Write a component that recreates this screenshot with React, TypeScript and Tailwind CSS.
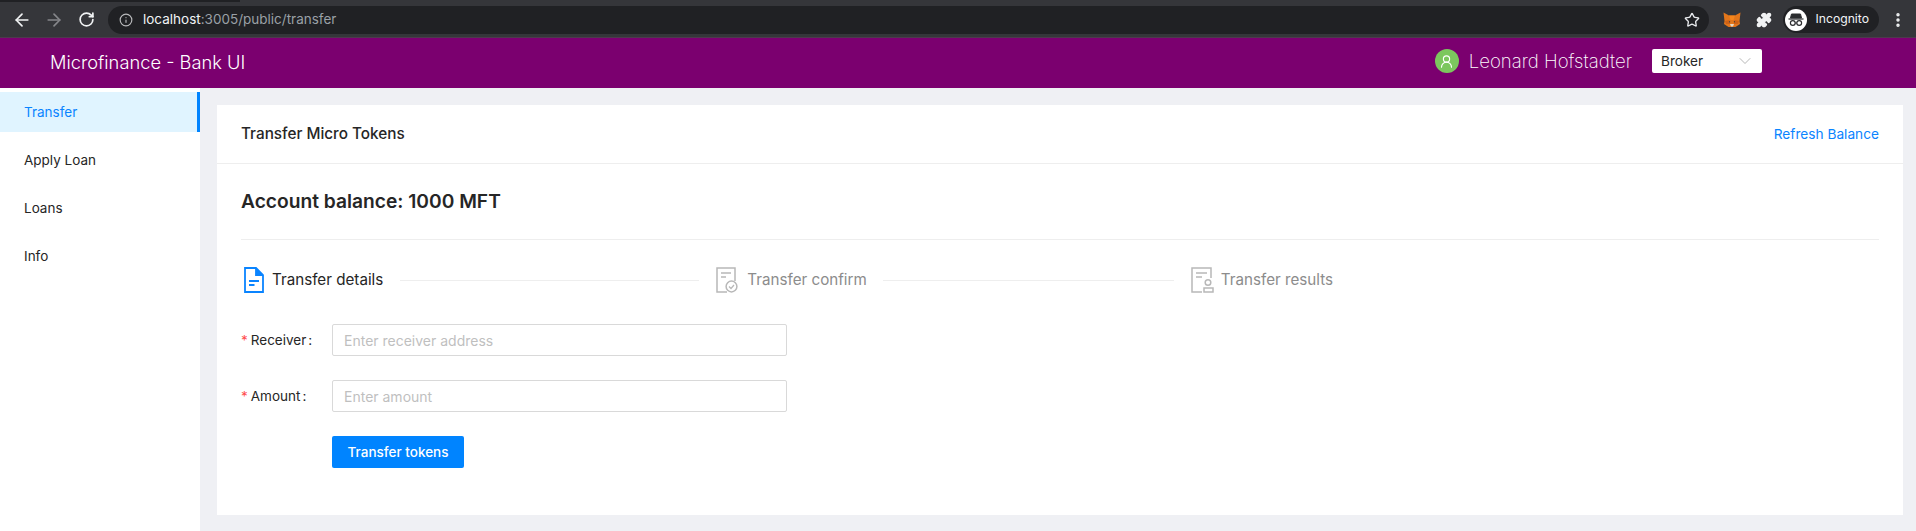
import { ArrowLeft, ArrowRight, ChevronDown, Info, MoreVertical, Puzzle, RotateCw, Star, UserRound } from "lucide-react";

function Fox() {
  return (
    <svg width="18" height="16" viewBox="0 0 18 16">
      <path d="M0.5 0.5 L6 3.5 H12 L17.5 0.5 L16.5 9 L17 12 L12.5 15 H5.5 L1 12 L1.5 9 Z" fill="#e2761b" />
      <path d="M6 3.5 H12 L10.5 8 H7.5 Z" fill="#f6851b" />
      <path d="M2 9 L6.5 8 L7 12 L3 12 Z M16 9 L11.5 8 L11 12 L15 12 Z" fill="#cd6116" />
      <path d="M7 12 H11 L10 14.5 H8 Z" fill="#e4d7c6" />
      <path d="M6 9 L7.5 10 L6 10.5 Z M12 9 L10.5 10 L12 10.5 Z" fill="#233447" />
    </svg>
  );
}

function IncognitoIcon() {
  return (
    <svg width="16" height="14" viewBox="0 0 16 14" fill="none" stroke="#2b2c2f">
      <path d="M3.5 1 H12.5 L13.5 5 H2.5 Z" fill="#2b2c2f" />
      <path d="M0.5 6 H15.5" strokeWidth="1.2" />
      <circle cx="4.8" cy="10" r="2.4" strokeWidth="1.2" />
      <circle cx="11.2" cy="10" r="2.4" strokeWidth="1.2" />
      <path d="M7.2 10 H8.8" strokeWidth="1.2" />
    </svg>
  );
}

function BrowserBar() {
  return (
    <div className="font-['Inter',sans-serif] text-white">
      <div className="h-[2px] bg-[#35363a]">
        <div className="h-full w-[240px] bg-[#202124]" />
      </div>
      <div className="flex h-[36px] items-center border-b border-[#4d3a4d] bg-[#35363a] pr-[9px] pl-[12px]">
        <ArrowLeft size={20} strokeWidth={2} className="text-[#f1f3f4]" />
        <ArrowRight size={20} strokeWidth={2} className="ml-[12px] text-[#85868a]" />
        <RotateCw size={17} strokeWidth={2.4} className="ml-[14px] text-[#f1f3f4]" />
        <div className="ml-[13px] flex h-[28px] flex-1 items-center rounded-full bg-[#202124] pr-[9px] pl-[11px]">
          <Info size={14} className="text-[#b9babc]" />
          <span className="ml-[10px] text-[13.5px] text-[#f1f3f4]">
            localhost<span className="text-[#9aa0a6]">:3005/public/transfer</span>
          </span>
          <Star size={16} className="ml-auto text-[#e8eaed]" />
        </div>
        <div className="ml-[14px]">
          <Fox />
        </div>
        <Puzzle size={16} fill="#f1f3f4" className="ml-[15px] text-[#f1f3f4]" />
        <div className="ml-[11px] flex h-[27px] items-center rounded-full bg-[#202124] pr-[10px] pl-[2px]">
          <div className="flex h-[22px] w-[22px] items-center justify-center rounded-full bg-white">
            <IncognitoIcon />
          </div>
          <span className="ml-[8px] text-[12.2px] text-[#f1f3f4]">Incognito</span>
        </div>
        <MoreVertical size={18} strokeWidth={2.6} className="ml-[10px] text-[#f1f3f4]" />
      </div>
    </div>
  );
}

function Header() {
  return (
    <div className="flex h-[50px] items-center bg-[#7b006f] pb-[3px] pl-[50px] text-white">
      <div className="pt-[2px] text-[18.3px] font-light">Microfinance - Bank UI</div>
      <div className="mr-[154px] ml-auto flex items-center">
        <div className="flex h-[24px] w-[24px] items-center justify-center rounded-full bg-[#7cc75e]">
          <UserRound size={15} strokeWidth={1.8} />
        </div>
        <div className="ml-[10px] text-[18.6px] font-extralight">Leonard Hofstadter</div>
        <div className="ml-[20px] flex h-[24px] w-[110px] items-center justify-between rounded-[2px] bg-white pr-[7px] pl-[9px] text-[13.6px] text-[#262626]">
          Broker
          <ChevronDown size={20} strokeWidth={1} className="text-[#a8a8a8]" />
        </div>
      </div>
    </div>
  );
}

function Sidebar() {
  const items = ["Apply Loan", "Loans", "Info"];
  return (
    <div className="w-[200px] shrink-0 bg-white pt-[4px] text-[13.5px] text-[#262626]">
      <div className="flex h-[40px] items-center border-r-[3px] border-[#0084ff] bg-[#e0f4ff] pt-[1px] pl-[24px] text-[#0a84ff]">Transfer</div>
      <div className="mt-[8px] flex flex-col gap-[8px]">
        {items.map((item) => (
          <div key={item} className="flex h-[40px] items-center pt-[1px] pl-[24px]">
            {item}
          </div>
        ))}
      </div>
    </div>
  );
}

function DetailsIcon() {
  return (
    <svg width="20" height="26" viewBox="0 0 20 26" fill="none" stroke="#0a84ff" strokeWidth="1.8">
      <path d="M1 1 H12 L19 8 V25 H1 Z" />
      <path d="M12 1 V8 H19" fill="#0a84ff" />
      <path d="M5 14 H15 M5 18 H10.5" />
    </svg>
  );
}

function ConfirmIcon() {
  return (
    <svg width="22" height="26" viewBox="0 0 22 26" fill="none" stroke="#b8b8b8" strokeWidth="1.5">
      <path d="M11 25 H1 V1 H19 V14" />
      <path d="M5 6 H15 M5 10 H10" />
      <circle cx="15.5" cy="19.5" r="5.4" fill="#fff" />
      <path d="M13 19.5 L15 21.5 L18 18" strokeWidth="1.2" />
    </svg>
  );
}

function ResultsIcon() {
  return (
    <svg width="23" height="26" viewBox="0 0 23 26" fill="none" stroke="#b8b8b8" strokeWidth="1.5">
      <path d="M11 25 H1 V1 H20 V11" />
      <path d="M5 6 H16 M5 10 H11" />
      <circle cx="17" cy="15.5" r="2.8" />
      <path d="M13 25 V21 H22 V25 Z" />
    </svg>
  );
}

function Steps() {
  return (
    <div className="mt-[28px] flex h-[24px] items-center text-[15.2px]">
      <div className="ml-[3px] flex items-center">
        <DetailsIcon />
        <span className="ml-[8px] pt-[1px] text-[#262626]">Transfer details</span>
      </div>
      <div className="ml-[17px] h-px w-[299px] bg-[#eeeeee]" />
      <div className="ml-[17px] flex items-center text-[#8c8c8c]">
        <ConfirmIcon />
        <span className="ml-[9px] pt-[1px]">Transfer confirm</span>
      </div>
      <div className="ml-[16px] h-px w-[291px] bg-[#eeeeee]" />
      <div className="ml-[17px] flex items-center text-[#8c8c8c]">
        <ResultsIcon />
        <span className="ml-[7px] pt-[1px]">Transfer results</span>
      </div>
    </div>
  );
}

function Field({ label, placeholder }: { label: string; placeholder: string }) {
  return (
    <div className="flex h-[32px] items-center">
      <div className="flex w-[91px] shrink-0 items-center text-[13.5px] text-[#262626]">
        <span className="mr-[3px] text-[#ff4d4f]">*</span>
        {label}
        <span className="ml-[2px]">:</span>
      </div>
      <input
        placeholder={placeholder}
        className="h-[32px] w-[455px] rounded-[2px] border border-[#d9d9d9] px-[11px] text-[14px] placeholder:text-[#bfbfbf]"
      />
    </div>
  );
}

export default function App() {
  return (
    <div className="flex h-[531px] flex-col overflow-hidden bg-[#eff0f4] font-['Inter',sans-serif]">
      <BrowserBar />
      <Header />
      <div className="flex flex-1">
        <Sidebar />
        <div className="flex-1 pt-[17px] pr-[13px] pb-[16px] pl-[17px]">
          <div className="h-full bg-white">
            <div className="flex h-[59px] items-center justify-between border-b border-[#eeeeee] px-[24px] pt-[1px]">
              <div className="text-[15.3px] font-medium text-[#262626]">Transfer Micro Tokens</div>
              <div className="text-[13.7px] text-[#0a84ff]">Refresh Balance</div>
            </div>
            <div className="px-[24px] pt-[23px]">
              <div className="border-b border-[#eeeeee] pb-[24px] text-[19.2px] leading-[28px] font-semibold text-[#262626]">
                Account balance: 1000 MFT
              </div>
              <Steps />
              <div className="mt-[32px] flex flex-col gap-[24px]">
                <Field label="Receiver" placeholder="Enter receiver address" />
                <Field label="Amount" placeholder="Enter amount" />
              </div>
              <button className="mt-[24px] ml-[91px] h-[32px] w-[132px] rounded-[2px] bg-[#0084ff] text-[13.5px] font-medium text-white">
                Transfer tokens
              </button>
            </div>
          </div>
        </div>
      </div>
    </div>
  );
}
